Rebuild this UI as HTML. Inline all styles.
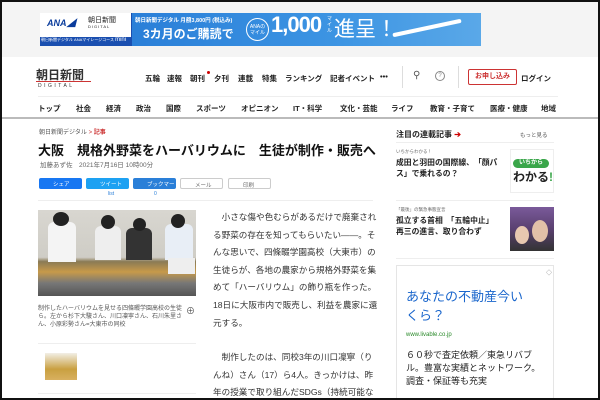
<!DOCTYPE html>
<html><head><meta charset="utf-8"><style>
*{margin:0;padding:0;box-sizing:border-box}
html,body{width:600px;height:400px;overflow:hidden}
body{background:#fff;font-family:"Liberation Sans","Noto Sans CJK JP",sans-serif;color:#222;position:relative}
.frame{position:absolute;left:0;top:0;width:600px;height:400px;border:2px solid #111;pointer-events:none;z-index:10}
.a{position:absolute;white-space:nowrap}
.top{position:absolute;left:0;top:0;width:600px;height:57px;background:#f4f4f4}
.nav span{position:absolute;font-size:7.5px;font-weight:bold;color:#222}
.btn{position:absolute;height:11px;border-radius:2px;font-size:5.5px;color:#fff;padding:2px 0 0 14px}
.body p{font-size:8.6px;line-height:17.6px;color:#333;white-space:normal}
</style></head><body>
<div class="top"></div>
<div class="a" style="left:40px;top:13px;width:441px;height:33px;background:#1a4fb0"></div>
<div class="a" style="left:40px;top:13px;width:91px;height:24px;background:#fff"></div>
<div class="a" style="left:47px;top:16px;font-size:9px;font-weight:bold;font-style:italic;color:#0a3c9c">ANA◢</div>
<div class="a" style="left:88px;top:15px;font-size:7px;color:#222">朝日新聞</div>
<div class="a" style="left:88px;top:24px;font-size:4px;color:#222;letter-spacing:1px">DIGITAL</div>
<div class="a" style="left:41px;top:37px;font-size:4px;color:#fff">朝日新聞デジタル ANAマイレージコース <span style="font-size:6px">mini</span></div>
<div class="a" style="left:132px;top:13px;width:349px;height:33px;background:linear-gradient(90deg,#2a7fd8,#3d95e3 60%,#5aa8e8)"></div>
<div class="a" style="left:135px;top:16px;font-size:5.5px;color:#fff;font-weight:bold">朝日新聞デジタル 月額3,800円 (税込み)</div>
<div class="a" style="left:143px;top:25px;font-size:12px;color:#fff;font-weight:bold">3カ月のご購読で</div>
<div class="a" style="left:246px;top:18px;width:23px;height:23px;border-radius:50%;border:1px solid #fff;font-size:5px;color:#fff;text-align:center;padding-top:5px;line-height:6px">ANAの<br>マイル</div>
<div class="a" style="left:271px;top:12px;font-size:22px;color:#fff;font-weight:bold;letter-spacing:-1px">1,000</div>
<div class="a" style="left:327px;top:16px;font-size:5px;color:#fff;width:6px;white-space:normal;line-height:6px">マイル</div>
<div class="a" style="left:334px;top:13px;font-size:21px;color:#fff">進呈！</div>
<div class="a" style="left:392px;top:26px;width:70px;height:4px;background:#fff;border-radius:3px;transform:rotate(-12deg)"></div>
<div class="a" style="left:36px;top:66px;font-size:12px;font-weight:bold;color:#333">朝日新聞</div>
<div class="a" style="left:36px;top:81px;width:55px;height:1px;background:#c33"></div>
<div class="a" style="left:38px;top:83px;font-size:5px;letter-spacing:2.5px;color:#333">DIGITAL</div>
<div class="nav">
<span style="left:145px;top:73px">五輪</span><span style="left:167px;top:73px">速報</span><span style="left:190px;top:73px">朝刊</span><span style="left:214px;top:73px">夕刊</span><span style="left:238px;top:73px">連載</span><span style="left:262px;top:73px">特集</span><span style="left:285px;top:73px">ランキング</span><span style="left:330px;top:73px">記者イベント</span><span style="left:380px;top:72px">•••</span>
</div>
<div class="a" style="left:207px;top:71px;width:3px;height:3px;border-radius:50%;background:#c00"></div>
<div class="a" style="left:402px;top:66px;width:1px;height:22px;background:#ddd"></div>
<div class="a" style="left:413px;top:70px;font-size:10px;color:#555">⚲</div>
<div class="a" style="left:435px;top:71px;width:10px;height:10px;border:1px solid #888;border-radius:50%;font-size:6px;text-align:center;line-height:8px;color:#888">?</div>
<div class="a" style="left:458px;top:66px;width:1px;height:22px;background:#ddd"></div>
<div class="a" style="left:468px;top:69px;width:49px;height:16px;border:1px solid #c33;border-radius:2px;font-size:7px;font-weight:bold;color:#c33;text-align:center;line-height:14px">お申し込み</div>
<div class="a" style="left:521px;top:73px;font-size:7.5px;font-weight:bold">ログイン</div>
<div class="a" style="left:38px;top:96px;width:520px;height:1px;background:#eee"></div>
<div class="nav">
<span style="left:38px;top:103px">トップ</span><span style="left:76px;top:103px">社会</span><span style="left:106px;top:103px">経済</span><span style="left:136px;top:103px">政治</span><span style="left:166px;top:103px">国際</span><span style="left:196px;top:103px">スポーツ</span><span style="left:241px;top:103px">オピニオン</span><span style="left:293px;top:103px">IT・科学</span><span style="left:340px;top:103px">文化・芸能</span><span style="left:391px;top:103px">ライフ</span><span style="left:430px;top:103px">教育・子育て</span><span style="left:490px;top:103px">医療・健康</span><span style="left:541px;top:103px">地域</span>
</div>
<div class="a" style="left:0;top:117px;width:600px;height:2px;background:#bbb"></div>
<div class="a" style="left:39px;top:127px;font-size:6px;color:#555">朝日新聞デジタル <span style="color:#c33">&gt;</span> <span style="color:#c33;font-weight:bold">記事</span></div>
<div class="a" style="left:38px;top:140px;font-size:13px;font-weight:bold;color:#111">大阪　規格外野菜をハーバリウムに　生徒が制作・販売へ</div>
<div class="a" style="left:40px;top:159px;font-size:6.5px;color:#666">加藤あず佐　2021年7月16日 10時00分</div>
<div class="btn" style="left:39px;top:178px;width:43px;background:#1877f2">シェア</div>
<div class="btn" style="left:86px;top:178px;width:43px;background:#1da1f2">ツイート</div>
<div class="btn" style="left:133px;top:178px;width:43px;background:#2a7fd8">ブックマーク</div>
<div class="btn" style="left:180px;top:178px;width:43px;background:#fff;border:1px solid #ccc;color:#666">メール</div>
<div class="btn" style="left:228px;top:178px;width:43px;background:#fff;border:1px solid #ccc;color:#666">印刷</div>
<div class="a" style="left:108px;top:191px;font-size:5px;color:#2a7fd8">list</div>
<div class="a" style="left:154px;top:191px;font-size:5px;color:#2a7fd8">0</div>
<div class="a" style="left:38px;top:200px;width:335px;height:1px;background:#eee"></div>
<div class="a" style="left:38px;top:210px;width:158px;height:86px;background:linear-gradient(180deg,#d8d6d0 0%,#cfcdc6 55%,#8a7a55 60%,#c79a4a 72%,#777 85%,#555 100%)"></div>
<div class="a" style="left:48px;top:222px;width:28px;height:40px;background:#f4f4f4;border-radius:6px 6px 0 0"></div>
<div class="a" style="left:53px;top:212px;width:16px;height:14px;background:#222;border-radius:50%"></div>
<div class="a" style="left:95px;top:226px;width:26px;height:34px;background:#eee;border-radius:6px 6px 0 0"></div>
<div class="a" style="left:101px;top:215px;width:14px;height:14px;background:#222;border-radius:50%"></div>
<div class="a" style="left:126px;top:228px;width:26px;height:32px;background:#333;border-radius:6px 6px 0 0"></div>
<div class="a" style="left:133px;top:218px;width:13px;height:13px;background:#222;border-radius:50%"></div>
<div class="a" style="left:165px;top:224px;width:28px;height:36px;background:#e8eef6;border-radius:6px 6px 0 0"></div>
<div class="a" style="left:171px;top:214px;width:14px;height:14px;background:#222;border-radius:50%"></div>
<div class="a" style="left:168px;top:258px;width:27px;height:16px;background:#eee"></div>
<div class="a" style="left:38px;top:305px;width:144px;font-size:6px;line-height:8px;color:#555;white-space:normal">制作したハーバリウムを見せる四條畷学園高校の生徒ら。左から杉下大駿さん、川口凜寧さん、石川朱里さん、小原彩勢さん=大東市の同校</div>
<div class="a" style="left:186px;top:304px;font-size:9px;color:#555">⊕</div>
<div class="a" style="left:38px;top:343px;width:158px;height:1px;background:#eee"></div>
<div class="a" style="left:45px;top:353px;width:32px;height:27px;background:linear-gradient(180deg,#f2efe6,#c9a040 60%,#d8b060)"></div>
<div class="a" style="left:38px;top:393px;width:158px;height:1px;background:#eee"></div>
<div class="a body" style="left:213px;top:209px;width:166px;height:191px;overflow:hidden">
<p style="text-indent:1em">小さな傷や色むらがあるだけで廃棄される野菜の存在を知ってもらいたい――。そんな思いで、四條畷学園高校（大東市）の生徒らが、各地の農家から規格外野菜を集めて「ハーバリウム」の飾り瓶を作った。18日に大阪市内で販売し、利益を農家に還元する。</p>
<p style="text-indent:1em;margin-top:17px">制作したのは、同校3年の川口凜寧（りんね）さん（17）ら4人。きっかけは、昨年の授業で取り組んだSDGs（持続可能な開発目標）のフィールドワークだ。特に規格外野菜に興味を持った川口さんらは、学校近くの農家を訪ねた。</p>
</div>
<div class="a" style="left:396px;top:129px;font-size:8px;font-weight:bold">注目の連載記事 <span style="color:#c00">➔</span></div>
<div class="a" style="left:520px;top:131px;font-size:5.5px;color:#555">もっと見る</div>
<div class="a" style="left:396px;top:142px;width:158px;height:1px;background:#eee"></div>
<div class="a" style="left:396px;top:149px;font-size:4.5px;color:#666">いちからわかる！</div>
<div class="a" style="left:396px;top:157px;font-size:7.8px;line-height:11px;font-weight:bold;white-space:normal;width:110px">成田と羽田の国際線、「顔パス」で乗れるの？</div>
<div class="a" style="left:510px;top:149px;width:44px;height:44px;border:1px solid #eee;background:#fff"></div>
<div class="a" style="left:513px;top:159px;width:36px;height:9px;border-radius:5px;background:#3aa64a;color:#fff;font-size:6px;text-align:center;line-height:9px;font-weight:bold">いちから</div>
<div class="a" style="left:513px;top:168px;font-size:12px;font-weight:bold;color:#222">わかる<span style="color:#3aa64a">!</span></div>
<div class="a" style="left:396px;top:200px;width:158px;height:1px;background:#eee"></div>
<div class="a" style="left:396px;top:207px;font-size:4.5px;color:#666">「最後」の緊急事態宣言</div>
<div class="a" style="left:396px;top:215px;font-size:7.8px;line-height:11px;font-weight:bold">孤立する首相　「五輪中止」<br>再三の進言、取り合わず</div>
<div class="a" style="left:510px;top:207px;width:44px;height:44px;background:linear-gradient(180deg,#7a5a9a,#5a4070 50%,#333)"></div>
<div class="a" style="left:515px;top:226px;width:14px;height:18px;background:#e8c8b0;border-radius:50%"></div>
<div class="a" style="left:532px;top:220px;width:16px;height:22px;background:#e2c0a8;border-radius:50%"></div>
<div class="a" style="left:396px;top:258px;width:158px;height:1px;background:#eee"></div>
<div class="a" style="left:396px;top:265px;width:158px;height:135px;border:1px solid #e5e5e5;border-bottom:none"></div>
<div class="a" style="left:546px;top:268px;font-size:6px;color:#888">◇</div>
<div class="a" style="left:406px;top:287px;width:125px;font-size:13px;line-height:19px;color:#1a66cc;white-space:normal">あなたの不動産今いくら？</div>
<div class="a" style="left:406px;top:332px;font-size:6px;color:#2a8a2a">www.livable.co.jp</div>
<div class="a" style="left:406px;top:349px;width:140px;font-size:9px;line-height:13px;color:#222;white-space:normal">６０秒で査定依頼／東急リバブル。豊富な実績とネットワーク。調査・保証等も充実</div>
<div class="frame"></div>
</body></html>
